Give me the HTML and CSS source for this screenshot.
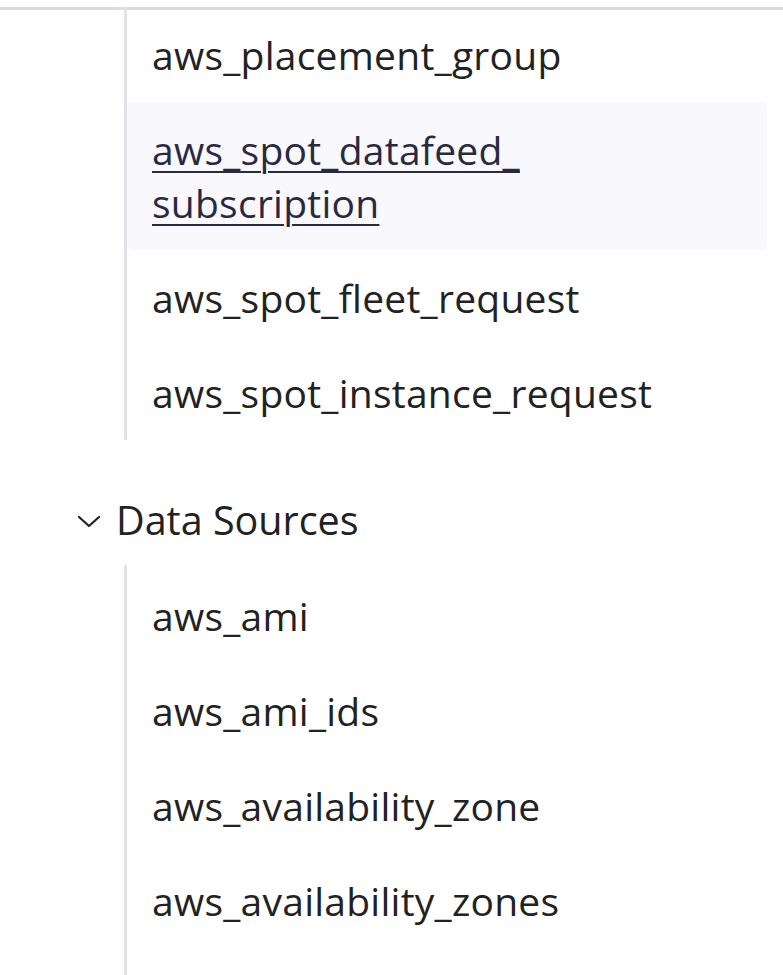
FILE: index.html
```html
<!DOCTYPE html>
<html lang="en">
<head>
    <meta charset="UTF-8">
    <meta name="viewport" content="width=device-width, initial-scale=1.0">
    <title>Provider docs nav</title>
    <link rel="stylesheet" href="styles.css">
</head>
<body>
    <div class="topbar"></div>

    <div class="nav">
        <ul class="nav-list first-list">
            <li class="item first"><a href="javascript:;">aws_placement_group</a></li>
            <li class="item active"><a href="javascript:;">aws_spot_datafeed_<br>subscription</a></li>
            <li class="item"><a href="javascript:;">aws_spot_fleet_request</a></li>
            <li class="item"><a href="javascript:;">aws_spot_instance_request</a></li>
        </ul>

        <div class="group">
            <div class="group-title">
                <svg class="chevron" width="24" height="14" viewBox="0 0 24 14">
                    <path d="M2 3 L12 12 L22 3" fill="none" stroke="#222" stroke-width="2.2" stroke-linecap="round" stroke-linejoin="round"/>
                </svg>
                <span>Data Sources</span>
            </div>
            <ul class="nav-list last-list">
                <li class="item"><a href="javascript:;">aws_ami</a></li>
                <li class="item"><a href="javascript:;">aws_ami_ids</a></li>
                <li class="item"><a href="javascript:;">aws_availability_zone</a></li>
                <li class="item"><a href="javascript:;">aws_availability_zones</a></li>
            </ul>
        </div>
    </div>
</body>
</html>
```

FILE: styles.css
```css
* {
  margin: 0;
  padding: 0;
  box-sizing: border-box;
}

body {
  background: #fff;
  font-family: "Open Sans", "Noto Sans", sans-serif;
  color: #222;
  overflow: hidden;
  height: 975px;
}

.topbar {
  height: 10px;
  border-bottom: 3px solid #dcdcdc;
}

.nav {
  padding-left: 124px;
  padding-right: 16px;
}

.nav-list {
  list-style: none;
  border-left: 3px solid #e2e2ea;
}

.first-list {
  margin-top: 26px;
}

.last-list {
  padding-bottom: 60px;
}

.item {
  padding: 21px 25px;
  font-size: 39px;
  line-height: 53px;
  letter-spacing: 0.25px;
  border-radius: 6px;
}

.item.first {
  margin-top: -29px;
}

.item a {
  color: #222;
  text-decoration: none;
}

.item.active {
  background: #f9f9fd;
}

.item.active a {
  color: #2a2942;
  text-decoration: underline;
  text-decoration-thickness: 2px;
  text-underline-offset: 6px;
}

.group {
  margin-top: 36px;
}

.group-title {
  display: flex;
  align-items: center;
  gap: 15px;
  margin-left: -47px;
  padding: 18px 0;
  font-size: 39.5px;
  line-height: 53px;
}

.chevron {
  display: block;
}

.group + .group {
  margin-top: 0;
}

.last-list .item:first-child {
  padding-top: 24px;
}
```
